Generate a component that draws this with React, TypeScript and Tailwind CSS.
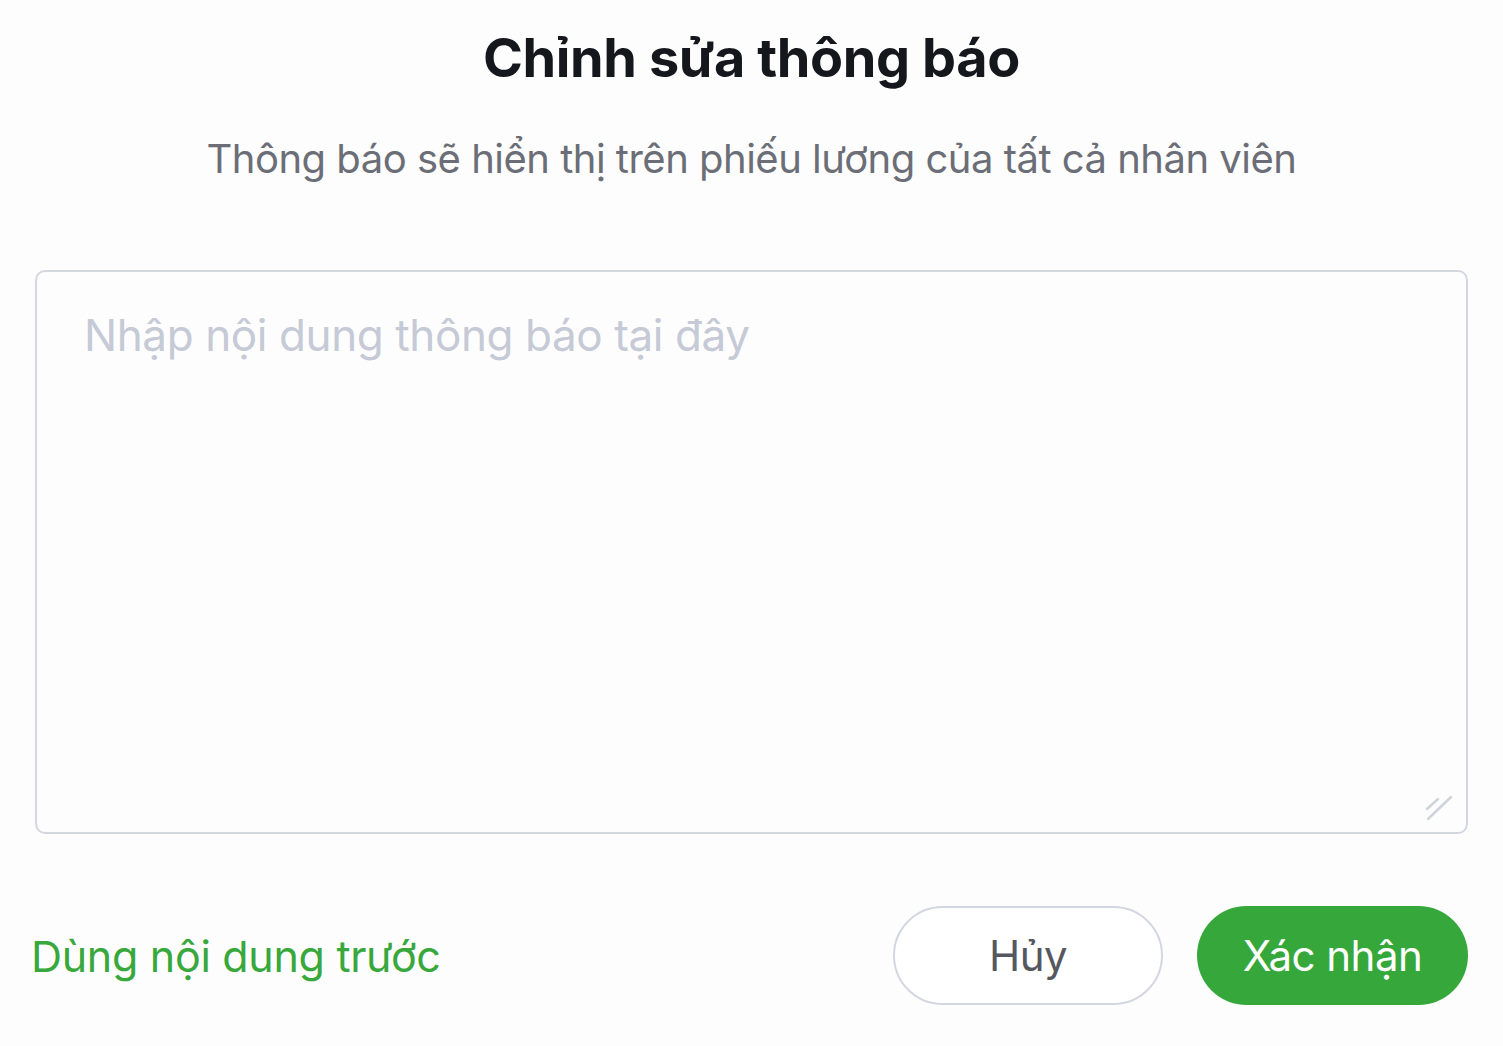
import { useState } from 'react'

export default function App() {
  const [text, setText] = useState('')

  return (
    <div
      className="min-h-screen w-full bg-[#fdfdfd] px-[35px] flex flex-col"
      style={{ fontFamily: 'Inter, "Noto Sans", sans-serif' }}
    >
      <h1 className="mt-[22px] text-center text-[54px] leading-[72px] font-bold text-[#15171c] tracking-[-0.4px]">
        Chỉnh sửa thông báo
      </h1>
      <p className="mt-[38px] text-center text-[40px] leading-[54px] text-[#6b6e76] tracking-[-0.5px]">
        Thông báo sẽ hiển thị trên phiếu lương của tất cả nhân viên
      </p>

      {/* Textarea */}
      <div className="relative mt-[84px] h-[564px] rounded-[10px] border-2 border-[#d3d7e0] bg-[#fdfdfd]">
        <textarea
          value={text}
          onChange={(e) => setText(e.target.value)}
          placeholder="Nhập nội dung thông báo tại đây"
          className="h-full w-full resize-none bg-transparent px-[47px] pt-[35px] pb-[36px] text-[44px] leading-[56px] text-[#1f2937] placeholder:text-[#c5cad6] outline-none tracking-[-0.4px]"
        />
        <svg
          className="absolute right-[12px] bottom-[10px]"
          width="30"
          height="30"
          viewBox="0 0 30 30"
          fill="none"
          stroke="#cfd3dc"
          strokeWidth="2.5"
          strokeLinecap="round"
        >
          <line x1="4" y1="27" x2="27" y2="5" />
          <line x1="3" y1="17" x2="14" y2="7" />
        </svg>
      </div>

      {/* Actions */}
      <div className="mt-[72px] flex items-center justify-between">
        <button className="-ml-[4px] text-[43px] leading-[56px] text-[#38a83c] tracking-[-0.3px]">
          Dùng nội dung trước
        </button>
        <div className="flex items-center gap-[34px]">
          <button className="h-[99px] w-[270px] rounded-full border-2 border-[#d3d7e0] bg-white text-[42px] text-[#55585f] tracking-[-0.5px]">
            Hủy
          </button>
          <button className="h-[99px] w-[271px] rounded-full bg-[#36a83b] text-[42px] text-white tracking-[-0.5px]">
            Xác nhận
          </button>
        </div>
      </div>
    </div>
  )
}
